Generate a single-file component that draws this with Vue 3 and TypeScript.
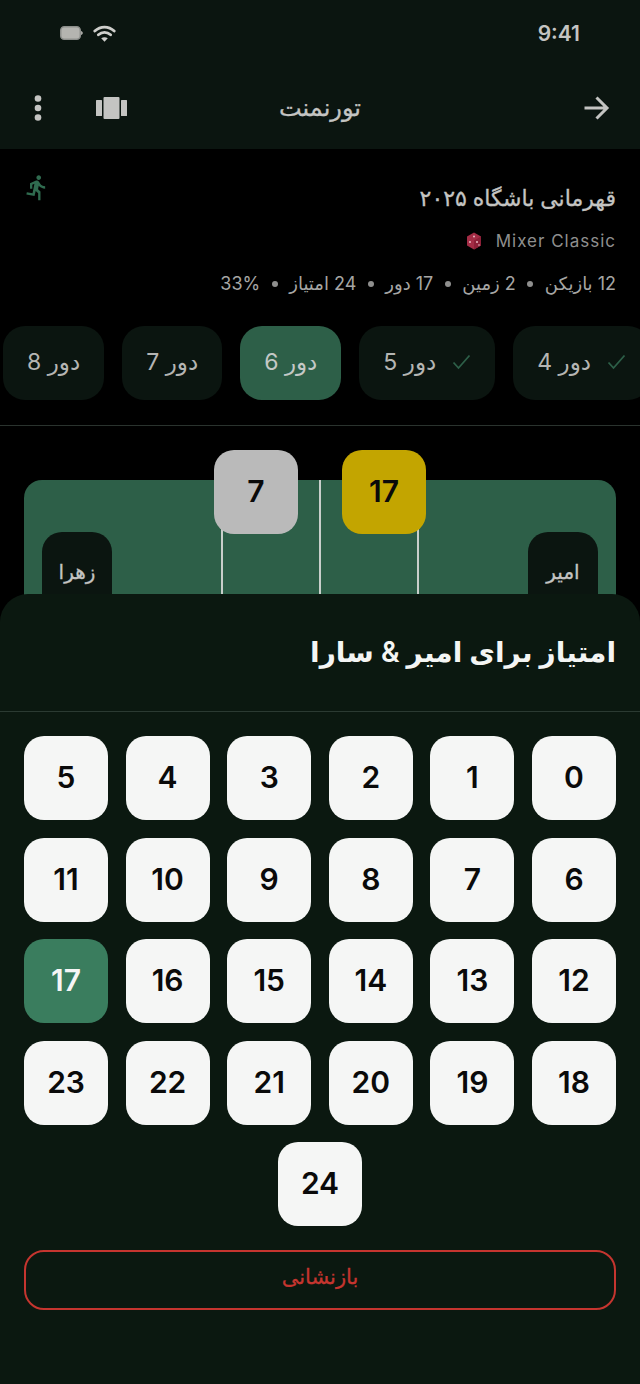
<template>
  <div class="screen">
    <header class="topbar">
      <div class="status">
        <div class="status-icons">
          <svg width="23" height="14" viewBox="0 0 23 14">
            <rect x="0.750" y="0.750" width="19.500" height="12.500" rx="3.500" fill="#b4b4b0" stroke="#8d8f8c" stroke-width="1.500" />
            <path d="M21 5v4c1-.2 1.800-1 1.800-2S22 5.200 21 5z" fill="#a8a8a5" />
          </svg>
          <svg width="23" height="17" viewBox="0 0 23 17">
            <path d="M1.800 6C7.500.8 15.500.8 21.200 6M5.400 9.800c3.600-3.100 8.600-3.100 12.200 0" fill="none" stroke="#cfcfcc" stroke-width="2.800" stroke-linecap="round" />
            <path d="M11.500 16.800 8.200 13.300c2-1.400 4.600-1.400 6.600 0z" fill="#cfcfcc" />
          </svg>
        </div>
        <span class="clock">9:41</span>
      </div>
      <div class="appbar">
        <div class="appbar-side">
          <svg width="8" height="26" viewBox="0 0 8 26">
            <circle cx="4" cy="3.500" r="3.300" fill="#c4c4c2" />
            <circle cx="4" cy="13" r="3.300" fill="#c4c4c2" />
            <circle cx="4" cy="22.500" r="3.300" fill="#c4c4c2" />
          </svg>
          <svg width="31" height="22" viewBox="0 0 31 22">
            <rect x="0" y="3" width="6" height="16" rx="0.500" fill="#c4c4c2" />
            <rect x="7.500" y="0" width="16" height="22" rx="1" fill="#c4c4c2" />
            <rect x="25" y="3" width="6" height="16" rx="0.500" fill="#c4c4c2" />
          </svg>
        </div>
        <h1 class="appbar-title">تورنمنت</h1>
        <svg width="28" height="26" viewBox="0 0 28 26">
          <path d="M2.500 13H25M14.500 2.500 25 13 14.500 23.500" fill="none" stroke="#c4c4c2" stroke-width="3" />
        </svg>
      </div>
    </header>

    <section class="info">
      <svg class="runner" width="28" height="33" viewBox="0 0 24 24">
        <path fill="#2f6b4f" d="M13.490 5.480c1.100 0 2-.9 2-2s-.9-2-2-2-2 .9-2 2 .9 2 2 2zm-3.600 13.900 1-4.400 2.100 2v6h2v-7.500l-2.100-2 .6-3c1.300 1.500 3.300 2.500 5.500 2.500v-2c-1.900 0-3.500-1-4.300-2.400l-1-1.600c-.4-.6-1-1-1.700-1-.3 0-.5.100-.8.100l-5.200 2.200v4.700h2v-3.400l1.800-.7-1.600 8.100-4.900-1-.4 2 7 1.400z" />
      </svg>
      <h2 class="info-title">قهرمانی باشگاه ۲۰۲۵</h2>
      <div class="info-mode">
        <span dir="ltr">Mixer Classic</span>
        <svg width="16" height="18" viewBox="0 0 16 18">
          <path d="M8 .5 15 4.500v9L8 17.500 1 13.500v-9z" fill="#a32c45" />
          <path d="M8 8.500 15 4.500v9L8 17.500z" fill="#8c2038" />
          <circle cx="8" cy="4.500" r="1" fill="#e8b8c2" />
          <circle cx="4" cy="10" r="1" fill="#e8b8c2" />
          <circle cx="11" cy="10" r="1" fill="#e8b8c2" />
          <circle cx="13" cy="13" r="0.800" fill="#e8b8c2" />
        </svg>
      </div>
      <div class="info-stats">
        <template v-for="(stat, i) in stats" :key="stat">
          <span v-if="i > 0" class="dot"></span>
          <span>{{ stat }}</span>
        </template>
      </div>
    </section>

    <nav class="rounds">
      <div v-for="round in rounds" :key="round.n" :class="['round', { 'round-active': round.n === 6 }]">
        <span>دور {{ round.n }}</span>
        <svg v-if="round.done" width="19" height="16" viewBox="0 0 19 16">
          <path d="M1.500 8.500 6.500 14 17.500 1.500" fill="none" stroke="#2d5f48" stroke-width="1.800" />
        </svg>
      </div>
    </nav>

    <div class="rule"></div>

    <section class="court-wrap">
      <div class="court">
        <div class="court-line line-left"></div>
        <div class="court-line line-center"></div>
        <div class="court-line line-right"></div>
        <div class="player">امیر</div>
        <div class="player">زهرا</div>
      </div>
      <div class="chip chip-silver">7</div>
      <div class="chip chip-gold">17</div>
    </section>

    <section class="sheet">
      <h3 class="sheet-title">امتیاز برای امیر &amp; سارا</h3>
      <div class="sheet-rule"></div>
      <div class="scores">
        <button v-for="score in scores" :key="score" :class="['score', { 'score-active': score === 17 }]">
          {{ score }}
        </button>
      </div>
      <button class="reset">بازنشانی</button>
    </section>
  </div>
</template>

<script setup lang="ts">
interface Round {
  n: number;
  done: boolean;
}

const stats: string[] = ['12 بازیکن', '2 زمین', '17 دور', '24 امتیاز', '33%'];

const rounds: Round[] = [
  { n: 4, done: true },
  { n: 5, done: true },
  { n: 6, done: false },
  { n: 7, done: false },
  { n: 8, done: false },
];

const scores: number[] = Array.from({ length: 25 }, (_, i) => i);
</script>

<style>
html,
body {
  margin: 0;
  background: #000;
}
</style>

<style scoped>
.screen {
  position: relative;
  width: 640px;
  height: 1384px;
  overflow: hidden;
  background: #000;
  font-family: Inter, "DejaVu Sans", sans-serif;
  color: #c4c4c2;
}

h1,
h2,
h3 {
  margin: 0;
  font-weight: 500;
}

.topbar {
  height: 149px;
  background: #0b1510;
}

.status {
  height: 66px;
  display: flex;
  justify-content: space-between;
  align-items: center;
  padding: 0 60px;
}

.status-icons {
  display: flex;
  align-items: center;
  gap: 10px;
}

.clock {
  font-size: 21px;
  font-weight: 600;
}

.appbar {
  position: relative;
  height: 83px;
  display: flex;
  align-items: center;
  justify-content: space-between;
  padding: 0 30px 0 34px;
}

.appbar-side {
  display: flex;
  align-items: center;
  gap: 54px;
}

.appbar-title {
  position: absolute;
  left: 0;
  right: 0;
  text-align: center;
  font-size: 24px;
  font-weight: 400;
  -webkit-text-stroke: 0.3px currentColor;
}

.info {
  position: relative;
  height: 177px;
  box-sizing: border-box;
  padding: 33px 24px 0;
  direction: rtl;
}

.runner {
  position: absolute;
  left: 23px;
  top: 22px;
}

.info-title {
  font-size: 22px;
  line-height: 32px;
  -webkit-text-stroke: 0.3px currentColor;
}

.info-mode {
  display: flex;
  align-items: center;
  gap: 14px;
  margin-top: 15px;
  font-size: 17px;
  line-height: 24px;
  letter-spacing: 1px;
  color: #8f8f8e;
}

.info-stats {
  display: flex;
  align-items: center;
  gap: 11.500px;
  margin-top: 19px;
  font-size: 18px;
  line-height: 24px;
  color: #a6a6a4;
}

.dot {
  width: 6px;
  height: 6px;
  border-radius: 50%;
  background: #8f8f8e;
}

.rounds {
  display: flex;
  flex-direction: row-reverse;
  justify-content: flex-end;
  gap: 18px;
  height: 74px;
  padding-left: 3px;
  overflow: hidden;
}

.round {
  flex-shrink: 0;
  display: flex;
  flex-direction: row-reverse;
  align-items: center;
  justify-content: center;
  gap: 16px;
  height: 74px;
  padding: 0 24px 2px;
  box-sizing: border-box;
  border-radius: 22px;
  background: #0b1510;
  font-size: 23px;
  color: #b5b5b3;
  direction: rtl;
}

.round-active {
  background: #2d5f48;
  color: #c4c8c6;
}

.rule {
  height: 1px;
  margin-top: 25px;
  background: #2a332e;
}

.court-wrap {
  position: relative;
  height: 260px;
  padding: 54px 24px 0;
}

.court {
  position: relative;
  height: 200px;
  display: flex;
  justify-content: space-between;
  align-items: flex-start;
  flex-direction: row-reverse;
  padding: 52px 18px 0;
  border-radius: 18px;
  background: #2d5f48;
}

.court-line {
  position: absolute;
  top: 0;
  bottom: 0;
  width: 1.500px;
  background: #c9cfcb;
}

.line-left {
  left: 197px;
}

.line-center {
  left: 295px;
  width: 2px;
}

.line-right {
  left: 393px;
}

.player {
  width: 70px;
  height: 90px;
  box-sizing: border-box;
  padding-top: 26px;
  border-radius: 20px 20px 0 0;
  background: #0b1510;
  text-align: center;
  font-size: 20px;
  line-height: 28px;
  -webkit-text-stroke: 0.3px currentColor;
}

.chip {
  position: absolute;
  top: 24px;
  width: 84px;
  height: 84px;
  box-sizing: border-box;
  padding-bottom: 3px;
  display: flex;
  align-items: center;
  justify-content: center;
  border-radius: 20px;
  font-size: 30px;
  font-weight: 600;
  color: #0a0a0a;
}

.chip-silver {
  left: 214px;
  background: #bababa;
}

.chip-gold {
  left: 342px;
  background: #c3a500;
}

.sheet {
  position: absolute;
  left: 0;
  right: 0;
  top: 594px;
  bottom: 0;
  border-radius: 28px 28px 0 0;
  background: #0b1810;
}

.sheet-title {
  height: 117px;
  box-sizing: border-box;
  padding: 36px 24px 0;
  direction: rtl;
  font-size: 28px;
  font-weight: 600;
  line-height: 44px;
  color: #f4f5f4;
}

.sheet-rule {
  height: 1px;
  background: #2b3a32;
}

.scores {
  display: flex;
  flex-wrap: wrap;
  justify-content: center;
  gap: 17.600px;
  padding: 24px 24px 0;
  direction: rtl;
}

.score {
  width: 84px;
  height: 84px;
  padding: 0 0 2px;
  border: none;
  border-radius: 20px;
  background: #f5f6f5;
  font-family: inherit;
  font-size: 30px;
  font-weight: 600;
  color: #0a0a0a;
}

.score-active {
  background: #3a7d5e;
  color: #f5f6f5;
}

.reset {
  display: block;
  width: 592px;
  height: 60px;
  margin: 24px 24px 0;
  padding: 0 0 8px;
  border: 2px solid #c5352f;
  border-radius: 20px;
  background: transparent;
  font-family: inherit;
  font-size: 21px;
  font-weight: 500;
  -webkit-text-stroke: 0.3px currentColor;
  color: #c5352f;
}
</style>
